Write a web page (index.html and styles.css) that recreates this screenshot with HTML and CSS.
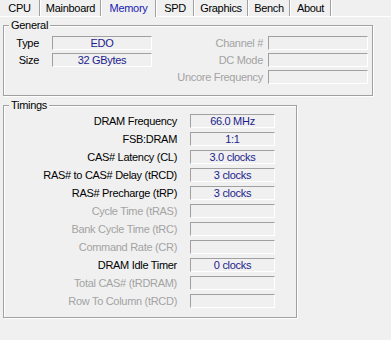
FILE: index.html
```html
<!DOCTYPE html>
<html lang="en">
<head>
  <meta charset="UTF-8">
  <title>Memory</title>
  <link rel="stylesheet" href="styles.css">
</head>
<body>
  <div class="tabs">
    <div class="tab">CPU</div>
    <div class="tab">Mainboard</div>
    <div class="tab active">Memory</div>
    <div class="tab">SPD</div>
    <div class="tab">Graphics</div>
    <div class="tab">Bench</div>
    <div class="tab">About</div>
  </div>

  <div class="group general">
    <div class="legend">General</div>
    <div class="general-cols">
      <div class="rows left">
        <div class="row"><span class="label">Type</span><span class="field wide">EDO</span></div>
        <div class="row"><span class="label">Size</span><span class="field wide">32 GBytes</span></div>
      </div>
      <div class="rows right">
        <div class="row"><span class="label off">Channel #</span><span class="field wide"></span></div>
        <div class="row"><span class="label off">DC Mode</span><span class="field wide"></span></div>
        <div class="row"><span class="label off">Uncore Frequency</span><span class="field wide"></span></div>
      </div>
    </div>
  </div>

  <div class="group timings">
    <div class="legend">Timings</div>
    <div class="rows">
      <div class="row"><span class="label">DRAM Frequency</span><span class="field">66.0 MHz</span></div>
      <div class="row"><span class="label">FSB:DRAM</span><span class="field">1:1</span></div>
      <div class="row"><span class="label">CAS# Latency (CL)</span><span class="field">3.0 clocks</span></div>
      <div class="row"><span class="label">RAS# to CAS# Delay (tRCD)</span><span class="field">3 clocks</span></div>
      <div class="row"><span class="label">RAS# Precharge (tRP)</span><span class="field">3 clocks</span></div>
      <div class="row"><span class="label off">Cycle Time (tRAS)</span><span class="field"></span></div>
      <div class="row"><span class="label off">Bank Cycle Time (tRC)</span><span class="field"></span></div>
      <div class="row"><span class="label off">Command Rate (CR)</span><span class="field"></span></div>
      <div class="row"><span class="label">DRAM Idle Timer</span><span class="field">0 clocks</span></div>
      <div class="row"><span class="label off">Total CAS# (tRDRAM)</span><span class="field"></span></div>
      <div class="row"><span class="label off">Row To Column (tRCD)</span><span class="field"></span></div>
    </div>
  </div>
</body>
</html>
```

FILE: styles.css
```css
* { margin: 0; padding: 0; box-sizing: border-box; }
html, body {
  background: #f0f0f0;
  color: #000;
  font-family: "Liberation Sans", Arial, sans-serif;
  font-size: 11px;
  letter-spacing: -0.3px;
  width: 391px;
  height: 340px;
  overflow: hidden;
}

/* tab strip */
.tabs {
  display: flex;
  height: 17px;
  border-bottom: 1px solid #fff;
}
.tab {
  height: 16px;
  line-height: 16px;
  text-align: center;
  border-right: 1px solid #a0a0a0;
  box-shadow: 1px 0 0 #fff;
  margin-right: 1px;
}
.tab:nth-child(1) { width: 40px; }
.tab:nth-child(2) { width: 60px; }
.tab:nth-child(3) { width: 54px; }
.tab:nth-child(4) { width: 37px; }
.tab:nth-child(5) { width: 53px; }
.tab:nth-child(6) { width: 41px; }
.tab:nth-child(7) { width: 40px; }
.tab.active {
  color: #1a1ab4;
  height: 17px;
  background: #f0f0f0;
  margin-bottom: -1px;
}

/* group boxes */
.group {
  position: relative;
  margin-left: 3px;
  border: 1px solid #a0a0a0;
  box-shadow: inset 1px 1px 0 #fff, 1px 1px 0 #fff;
}
.legend {
  position: absolute;
  top: -7px;
  left: 5px;
  padding: 0 2px;
  line-height: 13px;
  background: #f0f0f0;
}
.general {
  margin-top: 8px;
  width: 370px;
  height: 71px;
  padding-top: 10px;
}
.timings {
  margin-top: 9px;
  width: 294px;
  height: 213px;
  padding-top: 8px;
}

.general-cols { display: flex; }
.rows { display: flex; flex-direction: column; gap: 3px; }
.timings .rows { gap: 4px; }
.row { display: flex; align-items: center; height: 14px; }
.label { text-align: right; white-space: nowrap; }
.label.off { color: #a3a3a3; }

.left .label { width: 35px; margin-right: 13px; }
.right .label { width: 111px; margin-right: 5px; }
.timings .label { width: 173px; margin-right: 13px; }

.field {
  width: 85px;
  height: 14px;
  line-height: 12px;
  text-align: center;
  color: #1c1c8c;
  border: 1px solid #fff;
  border-top-color: #a0a0a0;
  border-left-color: #a0a0a0;
}
.field.wide { width: 100px; }
```
